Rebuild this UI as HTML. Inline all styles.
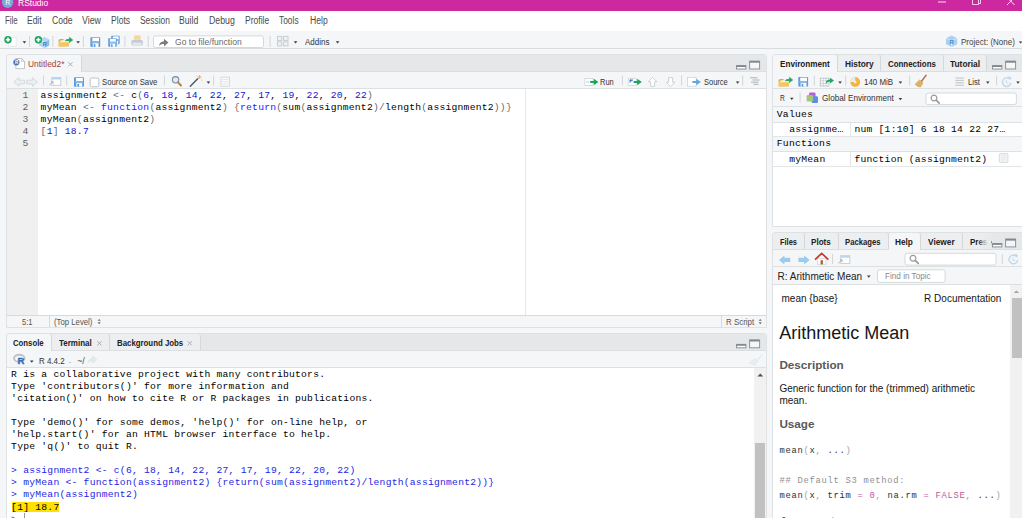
<!DOCTYPE html>
<html><head><meta charset="utf-8">
<style>
*{box-sizing:border-box;margin:0;padding:0}
html,body{width:1022px;height:518px;overflow:hidden;background:#f4f6f7;font-family:"Liberation Sans",sans-serif;}
.a{position:absolute;white-space:nowrap}
.mono{position:absolute;font-family:"Liberation Mono",monospace;font-size:9.7px;letter-spacing:0.228px;white-space:pre;color:#000;margin:0}
.pane{position:absolute;background:#fff;border:1px solid #dfe2e5;border-radius:3px 3px 0 0;overflow:hidden}
.ts{position:absolute;left:0;top:0;right:0;height:17px;background:#e5e7e8;border-bottom:1px solid #dcdfe1}
.tab{position:absolute;top:0;height:16px;border-right:1px solid #d5d8da;background:#eceeef;border-radius:3px 3px 0 0}
.tab.sel{background:#f4f6f7;border-right:1px solid #d5d8da;height:17px}
.tb{position:absolute;left:0;right:0;background:#f4f6f7;border-bottom:1px solid #dce0e3}
.k{color:#1a1aff}.n{color:#1414cd}.p{color:#6a6a6a}
.cb{color:#2525e6}
.hs{font-family:"Liberation Sans",sans-serif;color:#161616}
.hm{font-family:"Liberation Mono",monospace;font-size:8.8px;letter-spacing:0.72px;line-height:15px;white-space:pre;color:#2e2e2e}
.hm .g{color:#9aa3aa}.hm .m{color:#c0589a}.hm .c{color:#909090}
</style></head><body>

<!-- title bar -->
<div class="a" style="left:0;top:0;width:1022px;height:11px;background:#cc29a1"></div>
<!-- menu bar -->
<div class="a" style="left:0;top:11px;width:1022px;height:20px;background:#fff"></div>
<!-- main toolbar -->
<div class="a" style="left:0;top:31px;width:1022px;height:18px;background:#f4f6f7;border-bottom:1px solid #d9dcde"></div>

<!-- SOURCE PANE -->
<div class="pane" style="left:6px;top:54px;width:761px;height:274px">
  <div class="ts"></div>
  <div class="tab sel" style="left:0;width:75px"></div>
  <div class="tb" style="top:17px;height:17px"></div>
  <div class="a" style="left:0;top:34px;width:31px;height:227px;background:#f0f0f0"></div>
  <div class="a" style="left:518px;top:34px;width:1px;height:227px;background:#e8e8e8"></div>
  <div class="a" style="left:0;top:260px;width:759px;height:13px;background:#f4f6f7;border-top:1px solid #d6dadc"></div>
  <div class="a" style="left:42px;top:261px;width:1px;height:12px;background:#d6dadc"></div>
  <div class="a" style="left:714px;top:261px;width:1px;height:12px;background:#d6dadc"></div>
</div>
<div class="mono" style="left:7px;top:90.15px;width:21.6px;text-align:right;line-height:11.93px;color:#5f5f5f">1
2
3
4
5</div>
<div class="mono" style="left:40.6px;top:90.15px;line-height:11.93px">assignment2 <span class="p">&lt;-</span> c<span class="p">(</span><span class="n">6</span>, <span class="n">18</span>, <span class="n">14</span>, <span class="n">22</span>, <span class="n">27</span>, <span class="n">17</span>, <span class="n">19</span>, <span class="n">22</span>, <span class="n">20</span>, <span class="n">22</span><span class="p">)</span>
myMean <span class="p">&lt;-</span> <span class="k">function</span><span class="p">(</span>assignment2<span class="p">)</span> <span class="p">{</span><span class="k">return</span><span class="p">(</span>sum<span class="p">(</span>assignment2<span class="p">)/</span>length<span class="p">(</span>assignment2<span class="p">))}</span>
myMean<span class="p">(</span>assignment2<span class="p">)</span>
<span class="p">[</span><span class="n">1</span><span class="p">]</span> <span class="n">18.7</span></div>

<!-- CONSOLE PANE -->
<div class="pane" style="left:6px;top:333px;width:761px;height:190px">
  <div class="ts"></div>
  <div class="tab sel" style="left:0;width:45px"></div>
  <div class="tab" style="left:45px;width:58px"></div>
  <div class="tab" style="left:103px;width:91px"></div>
  <div class="tb" style="top:17px;height:17px"></div>
  <div class="a" style="left:747px;top:34px;width:13px;height:160px;background:#f1f1f1"></div>
  <div class="a" style="left:748px;top:109px;width:10px;height:80px;background:#c1c1c1"></div>
</div>
<div class="a" style="left:12px;top:502px;width:47px;height:9.5px;background:#ffe100"></div>
<div class="mono" style="left:11.1px;top:368.5px;line-height:12.1px">R is a collaborative project with many contributors.
Type 'contributors()' for more information and
'citation()' on how to cite R or R packages in publications.

Type 'demo()' for some demos, 'help()' for on-line help, or
'help.start()' for an HTML browser interface to help.
Type 'q()' to quit R.

<span class="cb">&gt; assignment2 &lt;- c(6, 18, 14, 22, 27, 17, 19, 22, 20, 22)
&gt; myMean &lt;- function(assignment2) {return(sum(assignment2)/length(assignment2))}
&gt; myMean(assignment2)</span>
[1] 18.7
<span class="cb">&gt;</span> </div>
<div class="a" style="left:24px;top:513px;width:1px;height:6px;background:#9a9a9a"></div>

<!-- ENV PANE -->
<div class="pane" style="left:772px;top:54px;width:256px;height:173px">
  <div class="ts"></div>
  <div class="tab sel" style="left:0;width:65px"></div>
  <div class="tab" style="left:65px;width:43px"></div>
  <div class="tab" style="left:108px;width:63px"></div>
  <div class="tab" style="left:171px;width:43px"></div>
  <div class="tb" style="top:17px;height:17px"></div>
  <div class="tb" style="top:34px;height:18px"></div>
  <div class="tb" style="top:52px;height:16px;border-bottom:1px solid #dfe2e4"></div>
  <div class="a" style="left:0;top:81px;width:256px;height:1px;background:#e3e6e8"></div>
  <div class="tb" style="top:82px;height:15px;border-bottom:1px solid #dfe2e4"></div>
  <div class="a" style="left:0;top:111px;width:256px;height:1px;background:#e3e6e8"></div>
  <div class="a" style="left:77px;top:68px;width:1px;height:13px;background:#e3e6e8"></div>
  <div class="a" style="left:77px;top:97px;width:1px;height:14px;background:#e3e6e8"></div>
</div>
<div class="mono" style="left:776.8px;top:110px;line-height:10px">Values</div>
<div class="mono" style="left:789.2px;top:125.4px;line-height:10px">assignme…</div>
<div class="mono" style="left:854.4px;top:125.4px;line-height:10px">num [1:10] 6 18 14 22 27…</div>
<div class="mono" style="left:776.8px;top:139.4px;line-height:10px">Functions</div>
<div class="mono" style="left:789.2px;top:154.9px;line-height:10px">myMean</div>
<div class="mono" style="left:854.4px;top:154.9px;line-height:10px">function (assignment2)</div>

<!-- HELP PANE -->
<div class="pane" style="left:772px;top:232px;width:256px;height:290px">
  <div class="ts"></div>
  <div class="tab" style="left:0;width:32px"></div>
  <div class="tab" style="left:32px;width:34px"></div>
  <div class="tab" style="left:66px;width:50px"></div>
  <div class="tab sel" style="left:116px;width:32px"></div>
  <div class="tab" style="left:148px;width:42px"></div>
  <div class="tab" style="left:190px;width:30px;border-right:none;background:linear-gradient(90deg,#eceeef 70%,#e5e7e8)"></div>
  <div class="tb" style="top:17px;height:17px"></div>
  <div class="tb" style="top:34px;height:18px"></div>
  <div class="a" style="left:237px;top:52px;width:13px;height:240px;background:#f1f1f1"></div>
  <div class="a" style="left:239px;top:65px;width:10px;height:60px;background:#c1c1c1"></div>
</div>
<div class="a hs" style="left:777.6px;top:271.5px;font-size:10px;line-height:10px;color:#222">R: Arithmetic Mean</div>
<div class="a hs" style="left:781.5px;top:294.2px;font-size:10px;line-height:10px">mean {base}</div>
<div class="a hs" style="left:924.1px;top:294.2px;font-size:10px;line-height:10px">R Documentation</div>
<div class="a hs" style="left:779.2px;top:323.7px;font-size:18px;line-height:18px">Arithmetic Mean</div>
<div class="a hs" style="left:779.4px;top:358.5px;font-size:11.7px;line-height:12px;font-weight:bold;color:#595959">Description</div>
<div class="a hs" style="left:779.4px;top:383.2px;font-size:10px;line-height:11.4px;white-space:normal;width:215px">Generic function for the (trimmed) arithmetic mean.</div>
<div class="a hs" style="left:779.4px;top:417.7px;font-size:11.7px;line-height:12px;font-weight:bold;color:#595959">Usage</div>
<div class="a hm" style="left:779.4px;top:444.4px">mean<span class="g">(</span>x<span class="g">,</span> ...<span class="g">)</span>

<span class="c">## Default S3 method:</span>
mean<span class="g">(</span>x<span class="g">,</span> trim <span class="m">=</span> <span class="m">0</span><span class="g">,</span> na.rm <span class="m">=</span> <span class="m">FALSE</span><span class="g">,</span> ...<span class="g">)</span></div>
<div class="a hs" style="left:779.4px;top:515px;font-size:11.7px;line-height:12px;font-weight:bold;color:#595959">Arguments</div>

<svg class="a" style="left:0;top:0" width="1022" height="518" viewBox="0 0 1022 518">
<defs>
<path id="dd" d="M0 0h3.6l-1.8 2.2z" fill="#3a3a3a"/>
<g id="floppy"><rect x="0" y="0" width="9.8" height="9.8" rx=".9" fill="#5c9bdb"/><rect x="1.9" y=".7" width="6.8" height="3.4" fill="#fff"/><rect x="1" y="4.1" width="7.800" height="2" fill="#86b8e8"/><rect x="2.300" y="6.100" width="5.800" height="3.700" fill="#fff"/><rect x="3.300" y="6.900" width="1.700" height="2.900" fill="#5c9bdb"/></g>
<g id="minmax" fill="none" stroke="#8c949b">
<rect x="0.5" y="5" width="9.4" height="3.4" fill="#fff"/><path d="M0.5 5.6h9.4" stroke-width="1.6" stroke="#7f8890"/>
<rect x="13.6" y="0.6" width="10" height="7.8" fill="#f4f6f7"/><path d="M13.6 1.2h10" stroke-width="1.8" stroke="#7f8890"/>
</g>
<g id="mag"><circle cx="3.4" cy="3.4" r="2.9" fill="none" stroke="#9a9a9a" stroke-width="1.2"/><path d="M5.6 5.6l3 3" stroke="#9a9a9a" stroke-width="1.7" stroke-linecap="round"/></g>
<g id="folder"><path d="M.6 4l1-1.500h3.600l1 1.100h4.400v6h-10z" fill="#e0a83f"/><path d="M2.200 4.200l7.600-1.400.8 3.200-8 1.200z" fill="#fffdf6" stroke="#e6dcc0" stroke-width=".4"/><path d="M.2 9.800l1.400-4.300h10.200l-1.400 4.300z" fill="#f1c660"/><path d="M.2 9.800l1.400-4.300h10.200" fill="none" stroke="#f9e3a4" stroke-width=".6"/><path d="M6.600 4.800c1-2 2.800-2.700 4.600-2.700v-2l4 3.200-4 3.200v-2c-1.700-.1-3.300.1-4.600.3z" fill="#2aa86c"/></g>
<g id="refresh"><path d="M8.7 2.2a4.3 4.3 0 1 0 1.5 3.9" fill="none" stroke="#c3d8ea" stroke-width="1.500"/><path d="M6.800 0l4 .3-1.200 3.700z" fill="#c3d8ea"/><path d="M5.5 3.4v3h2.4" fill="none" stroke="#c7dbed" stroke-width="1"/></g>
<g id="popout"><rect x="2.5" y="0.5" width="9" height="7.8" fill="#fff" stroke="#c9ced3"/><rect x="2.5" y="0.5" width="9" height="2" fill="#b9d6f0"/><path d="M0 8.2l3.6-3.4M1.6 4.6h2.2v2.2" fill="none" stroke="#aeb4ba" stroke-width="1"/></g>
<g id="xx"><path d="M0 0l4.2 4.2M4.2 0l-4.2 4.2" stroke="#a9adb1" stroke-width="1"/></g>
</defs>

<g id="title">
<circle cx="7.600" cy="2.300" r="5.700" fill="#76aadb"/>
<text x="5.300" y="5" font-family="Liberation Sans" font-size="7" fill="#fff">R</text>
<path d="M938 2h8" stroke="#fff" stroke-width="1" opacity=".85"/>
<path d="M972.5 -1v5.5h6v-5.5M974.5 -1v-1h6v5.5h-2" stroke="#fff" fill="none" stroke-width=".9" opacity=".85"/>
<path d="M1007 -2.5l7.5 7.5M1014.5 -2.5l-7.5 7.5" stroke="#fff" stroke-width="1" opacity=".9"/>
</g>

<g id="maintb">
<!-- new file -->
<rect x="8.3" y="37.4" width="7.8" height="8.8" fill="#fff" stroke="#dfe2e5" stroke-width=".6"/>
<circle cx="8" cy="39.700" r="3.700" fill="#1fa55f"/><path d="M8 37.600v4.200M5.900 39.700h4.200" stroke="#fff" stroke-width="1.600"/>
<use href="#dd" x="22.6" y="41.2"/>
<path d="M29.5 36v11M52.9 36v11M83.3 36v11M124.9 36v11M148.2 36v11M270.1 36v11" stroke="#d3d6d8" stroke-width="1"/>
<!-- new project -->
<path d="M39 39.400l5.200-2.400 5 2.200v6.300l-5 2.400-5.200-2.400z" fill="#b4d6f3"/><path d="M44.200 41.700l5-2.500v6.300l-5 2.400z" fill="#8ebfec"/><path d="M39 39.400l5.200 2.300 5-2.500M44.200 41.700v6.200" stroke="#dcecfa" stroke-width=".6" fill="none"/>
<text x="42.800" y="45.600" font-family="Liberation Sans" font-size="5.500" font-weight="bold" fill="#3f7dc4">R</text>
<circle cx="38.400" cy="39.800" r="3.700" fill="#1fa55f"/><path d="M38.400 37.700v4.200M36.300 39.800h4.200" stroke="#fff" stroke-width="1.600"/>
<!-- open -->
<use href="#folder" x="58" y="36.6"/>
<use href="#dd" x="76.3" y="41.2"/>
<!-- save / save all -->
<use href="#floppy" x="90.4" y="37.2"/>
<g transform="translate(111.2 35.8) scale(.86)"><use href="#floppy"/></g>
<g transform="translate(108.2 38.2) scale(.88)"><use href="#floppy"/></g>
<!-- print -->
<rect x="133.800" y="35.400" width="7" height="5.200" fill="#f6dcae"/><path d="M135 36.500h4.600M135 38h4.600" stroke="#eec98c" stroke-width=".6"/>
<rect x="131.300" y="40" width="11.600" height="5.400" rx="1.600" fill="#c3ccd6"/><rect x="132.600" y="42.600" width="9" height="2.400" fill="#e3e8ed"/>
<!-- goto box -->
<rect x="153.5" y="35.9" width="110" height="11.6" rx="2" fill="#fff" stroke="#d6d9db"/>
<path d="M159 46c.4-3 2.2-4.6 5-4.8v-2.4l4.4 3.8-4.4 3.8v-2.5c-2-.1-3.6.4-5 2.100z" fill="#7b7b7b"/>
<!-- grid -->
<g fill="#f0f2f3" stroke="#c5c9cd" stroke-width=".9"><rect x="277.4" y="36.4" width="4.4" height="4"/><rect x="283.6" y="36.4" width="4.4" height="4"/><rect x="277.4" y="41.9" width="4.4" height="4"/><rect x="283.6" y="41.9" width="4.4" height="4"/></g>
<use href="#dd" x="293.8" y="41.2"/>
<use href="#dd" x="335.8" y="41.2"/>
<!-- project -->
<path d="M946 38.2l5.6-2.8 5.6 2.800v6l-5.600 2.700-5.600-2.700z" fill="#a9d0f2"/><path d="M946 38.200l5.600 2.400 5.600-2.400M951.600 40.600v6.300" stroke="#dcecfa" stroke-width=".7" fill="none"/>
<text x="949.600" y="44.400" font-family="Liberation Sans" font-size="6" font-weight="bold" fill="#4a84c4">R</text>
<use href="#dd" x="1018.8" y="41.4"/>
</g>

<g id="srcpane">
<!-- tab icon -->
<path d="M15.800 58.500h5.800l2.900 2.900v7.200h-8.700z" fill="#fff" stroke="#b5b9bd" stroke-width=".8"/><path d="M21.600 58.500v2.900h2.900" fill="none" stroke="#b5b9bd" stroke-width=".7"/>
<circle cx="16.400" cy="62.300" r="3.100" fill="#4878b4"/><text x="14.900" y="64" font-family="Liberation Sans" font-size="4.600" font-weight="bold" fill="#fff">R</text>
<use href="#xx" x="68.300" y="62.200"/>
<!-- back/forward -->
<path d="M13.800 82l5.200-4.400v2.600h5.600v3.700h-5.600v2.500z" fill="#eceff1" stroke="#d3d7da" stroke-width=".9"/>
<path d="M37.600 82l-5.200-4.400v2.600h-5.600v3.700h5.600v2.500z" fill="#eceff1" stroke="#d3d7da" stroke-width=".9"/>
<path d="M43.500 75.500v10M66.700 75.500v10M164.400 75.500v10M213.600 75.500v10M622.400 75.500v10M681.600 75.500v10M742.700 75.500v10" stroke="#d3d6d8"/>
<use href="#popout" x="49.300" y="77"/>
<g transform="translate(74 77.300) scale(1.02 .96)"><use href="#floppy"/></g>
<rect x="90.200" y="78" width="8.600" height="8.800" rx="1.600" fill="#fff" stroke="#b9bcbf" stroke-width=".9"/>
<!-- magnifier -->
<circle cx="175.600" cy="79.800" r="3.200" fill="#dcecf9" stroke="#7d8b99" stroke-width="1.100"/><path d="M178 82.300l3 3.200" stroke="#b9823a" stroke-width="1.900" stroke-linecap="round"/>
<!-- wand -->
<path d="M190.300 86.200l7.400-7.400" stroke="#4f5560" stroke-width="1.400" stroke-linecap="round"/><path d="M199.600 75.200v3.600M197.800 77h3.600M201.400 79.800l1 .9M196.600 75.600l.8.800" stroke="#e7a91d" stroke-width=".9"/>
<use href="#dd" x="206.600" y="81.500"/>
<!-- list icon -->
<rect x="221" y="77.200" width="8.400" height="9" fill="#fafbfb" stroke="#d3d6d9" stroke-width=".9"/><path d="M222.500 79.500h6M222.500 81.700h6M222.500 83.900h6" stroke="#dde0e3" stroke-width=".8"/>
<!-- run -->
<rect x="584.900" y="78.400" width="8" height="7" fill="#fff" stroke="#d0d4d8" stroke-width=".8"/><path d="M586.300 82h3" stroke="#9ecbef" stroke-width="1"/>
<path d="M590.200 81h3.600v-2.300l4.600 3.300-4.600 3.300v-2.300h-3.600z" fill="#1fa35d"/>
<!-- rerun -->
<rect x="628.200" y="78.400" width="8" height="7" fill="#fff" stroke="#d0d4d8" stroke-width=".8"/>
<path d="M630 82.500c0-2 1.500-2.600 3-2.300" fill="none" stroke="#3f7fd0" stroke-width="1.200"/><path d="M629 80.600l2.200-1.800.3 2.800z" fill="#3f7fd0"/>
<path d="M633.600 81h3.600v-2.300l4.600 3.300-4.600 3.300v-2.300h-3.600z" fill="#1fa35d"/>
<!-- up/down -->
<path d="M652.600 77.300l4.300 4.500h-2.300v4.600h-4v-4.600h-2.300z" fill="#fff" stroke="#c9cdd1" stroke-width=".9"/>
<path d="M670.600 86.700l4.300-4.500h-2.300v-4.600h-4v4.600h-2.300z" fill="#fff" stroke="#c9cdd1" stroke-width=".9"/>
<!-- source -->
<rect x="687.600" y="77.400" width="8.600" height="8.800" fill="#fff" stroke="#d0d4d8" stroke-width=".8"/>
<path d="M692.400 81h3.800v-2.300l4.600 3.300-4.600 3.300v-2.300h-3.800z" fill="#62a6de"/>
<use href="#dd" x="735.800" y="81.500"/>
<path d="M750 77.800h7.500M752.500 80h7M751 82.200h7.500M753.500 84.300h5" stroke="#a4a9ae" stroke-width=".9"/>
<use href="#minmax" x="736" y="60.600"/>
<!-- status arrows -->
<path d="M97.600 320.800l1.600-1.900 1.600 1.900zM97.600 322.300l1.600 1.900 1.600-1.900z" fill="#6a6a6a"/>
<path d="M758.600 320.800l1.600-1.900 1.600 1.900zM758.600 322.300l1.600 1.900 1.600-1.900z" fill="#6a6a6a"/>
</g>

<g id="conpane">
<use href="#xx" x="97.300" y="341.200"/><use href="#xx" x="187.600" y="341.200"/>
<ellipse cx="19.300" cy="358.300" rx="5.300" ry="3.500" fill="none" stroke="#bfc3c7" stroke-width="1.900"/>
<text x="17.600" y="363.700" font-family="Liberation Sans" font-size="9.500" font-weight="bold" fill="#2a6cb8" stroke="#2a6cb8" stroke-width=".3">R</text>
<use href="#dd" x="30" y="360.500"/>
<path d="M88 363c.3-3 2-4.600 4.600-4.800v-2.200l4.200 3.600-4.200 3.600v-2.300c-1.900-.1-3.300.4-4.600 2.100z" fill="#e6e9ec" stroke="#dde1e4" stroke-width=".6"/>
<path d="M762.600 354.200l-7 8" stroke="#dfe3e6" stroke-width="1"/><path d="M749.500 363l5-4.600 3.400 2.800-2.500 4.300z" fill="#e6edf3" stroke="#dfe5ea" stroke-width=".6"/>
<use href="#minmax" x="736" y="339.400"/>
<path d="M757.400 376.400l2.900-2.800 2.900 2.800z" fill="#4f4f4f"/>
</g>

<g id="envpane">
<use href="#minmax" x="992" y="60.600"/>
<use href="#folder" x="778" y="76.600"/>
<g transform="translate(798.300 77) scale(1 .97)"><use href="#floppy"/></g>
<path d="M814.300 75.500v10M845.700 75.500v10M909.700 75.500v10M996.600 75.500v10" stroke="#d3d6d8"/>
<!-- import -->
<rect x="820.300" y="78.200" width="8.600" height="7.800" fill="#fff" stroke="#b4bac0" stroke-width=".8"/><path d="M820.300 80.800h8.600M820.300 83.400h8.600M823.200 78.200v7.800M826 78.200v7.800" stroke="#bcc2c8" stroke-width=".7"/>
<path d="M826 81.800c.8-1.600 2.200-2.300 4-2.300v-1.800l4 2.900-4 2.900v-1.800c-1.600-.1-2.900.4-4 2z" fill="#26a468"/>
<use href="#dd" x="838.300" y="81.500"/>
<!-- pie -->
<circle cx="855.200" cy="82" r="4.900" fill="#f4b53f"/><path d="M855.200 82v-4.900a4.900 4.900 0 0 0-4.900 4.900z" fill="#e9ebed"/><circle cx="855.200" cy="82" r="1.300" fill="#fbf3e2"/>
<use href="#dd" x="898.600" y="81.500"/>
<!-- broom -->
<path d="M926 75.400l-4.600 6" stroke="#b06a35" stroke-width="1.500" stroke-linecap="round"/><path d="M915.200 84.200l4.400-4.200 3.400 2.700-2.400 4.100c-2 .3-3.900-.7-5.400-2.600z" fill="#e3b566" stroke="#c28f45" stroke-width=".5"/><path d="M917 84.800l2.600-2.600M918.600 85.800l2.400-2.600" stroke="#c9994d" stroke-width=".5"/>
<!-- list -->
<path d="M955.400 78h8.400M955.400 80.400h8.400M955.400 82.800h8.400M955.400 85.200h8.400" stroke="#b7bcc1" stroke-width=".9"/>
<use href="#dd" x="986" y="81.500"/>
<use href="#refresh" x="1000.800" y="76.600"/>
<use href="#dd" x="1016.200" y="81.500"/>
<!-- tb2 -->
<use href="#dd" x="790" y="97.700"/>
<path d="M800.100 92.500v10" stroke="#d3d6d8"/>
<rect x="809" y="92.400" width="6.500" height="6.500" rx="1.200" fill="#b45fd3"/><rect x="811.500" y="96.200" width="6.500" height="6.800" rx="1.200" fill="#5b8fe6"/><rect x="806.600" y="95" width="6.500" height="6.500" rx="1.200" fill="#a5c679"/>
<use href="#dd" x="898.600" y="98"/>
<rect x="926" y="93" width="90.400" height="11.600" rx="2" fill="#fff" stroke="#d6d9db"/>
<use href="#mag" x="930.600" y="94.600"/>
<!-- row doc icon -->
<rect x="999.300" y="153.600" width="8.600" height="8.800" rx=".8" fill="#f3f4f5" stroke="#d4d7da" stroke-width=".9"/><path d="M1001 156h5M1001 158h5M1001 160h3.500" stroke="#dfe2e4" stroke-width=".7"/>
</g>

<g id="helppane">
<use href="#minmax" x="992" y="238.500"/>
<path d="M779 259.900l5.400-4.500v2.400h5.800v4.200h-5.800v2.400z" fill="#9acbf0"/>
<path d="M809.600 259.900l-5.400-4.500v2.400h-5.800v4.200h5.800v2.400z" fill="#9acbf0"/>
<!-- home -->
<rect x="817.400" y="258.600" width="8.600" height="5.800" fill="#fbfbfb" stroke="#c9cdd1" stroke-width=".6"/><rect x="820.600" y="260.200" width="2.300" height="4.200" fill="#a5642c"/>
<path d="M815 259.600l6.700-6.300 6.700 6.300" fill="none" stroke="#c8392b" stroke-width="1.700" stroke-linejoin="miter"/>
<path d="M832.500 254v10M1002.300 254v10" stroke="#d3d6d8"/>
<use href="#popout" x="838.300" y="255.200"/>
<rect x="905" y="253.300" width="91" height="11.800" rx="2" fill="#fff" stroke="#d6d9db"/>
<use href="#mag" x="909.600" y="254.800"/>
<g transform="translate(1007.400 254)"><use href="#refresh"/></g>
<use href="#dd" x="867" y="275.600"/>
<rect x="877.500" y="269.800" width="67.600" height="12.600" rx="2" fill="#fff" stroke="#d6d9db"/>
<path d="M1013.600 293l2.800-2.600 2.800 2.600z" fill="#a5a5a5"/>
</g>

</svg>
<div class="a" style="left:17.8px;top:-1.8px;font-size:9.5px;line-height:9.5px;color:#ffffff;transform:scaleX(0.893);transform-origin:0 0">RStudio</div>
<div class="a" style="left:5.0px;top:15.7px;font-size:10px;line-height:10px;color:#4a4a4a;transform:scaleX(0.781);transform-origin:0 0">File</div>
<div class="a" style="left:27.4px;top:15.7px;font-size:10px;line-height:10px;color:#4a4a4a;transform:scaleX(0.847);transform-origin:0 0">Edit</div>
<div class="a" style="left:52.2px;top:15.7px;font-size:10px;line-height:10px;color:#4a4a4a;transform:scaleX(0.862);transform-origin:0 0">Code</div>
<div class="a" style="left:82.2px;top:15.7px;font-size:10px;line-height:10px;color:#4a4a4a;transform:scaleX(0.884);transform-origin:0 0">View</div>
<div class="a" style="left:111.0px;top:15.7px;font-size:10px;line-height:10px;color:#4a4a4a;transform:scaleX(0.859);transform-origin:0 0">Plots</div>
<div class="a" style="left:139.5px;top:15.7px;font-size:10px;line-height:10px;color:#4a4a4a;transform:scaleX(0.838);transform-origin:0 0">Session</div>
<div class="a" style="left:178.5px;top:15.7px;font-size:10px;line-height:10px;color:#4a4a4a;transform:scaleX(0.863);transform-origin:0 0">Build</div>
<div class="a" style="left:208.8px;top:15.7px;font-size:10px;line-height:10px;color:#4a4a4a;transform:scaleX(0.876);transform-origin:0 0">Debug</div>
<div class="a" style="left:244.8px;top:15.7px;font-size:10px;line-height:10px;color:#4a4a4a;transform:scaleX(0.853);transform-origin:0 0">Profile</div>
<div class="a" style="left:279.2px;top:15.7px;font-size:10px;line-height:10px;color:#4a4a4a;transform:scaleX(0.839);transform-origin:0 0">Tools</div>
<div class="a" style="left:309.8px;top:15.7px;font-size:10px;line-height:10px;color:#4a4a4a;transform:scaleX(0.860);transform-origin:0 0">Help</div>
<div class="a" style="left:175.2px;top:36.7px;font-size:9.6px;line-height:9.6px;color:#6a6a6a;transform:scaleX(0.893);transform-origin:0 0">Go to file/function</div>
<div class="a" style="left:304.8px;top:36.7px;font-size:9.6px;line-height:9.6px;color:#333;transform:scaleX(0.835);transform-origin:0 0">Addins</div>
<div class="a" style="left:960.9px;top:36.9px;font-size:9.6px;line-height:9.6px;color:#444;transform:scaleX(0.835);transform-origin:0 0">Project: (None)</div>
<div class="a" style="left:28.2px;top:58.8px;font-size:9.6px;line-height:9.6px;color:#a5423c;transform:scaleX(0.875);transform-origin:0 0">Untitled2*</div>
<div class="a" style="left:102.0px;top:76.7px;font-size:9.6px;line-height:9.6px;color:#333;transform:scaleX(0.811);transform-origin:0 0">Source on Save</div>
<div class="a" style="left:600.3px;top:76.9px;font-size:9.6px;line-height:9.6px;color:#333;transform:scaleX(0.778);transform-origin:0 0">Run</div>
<div class="a" style="left:703.7px;top:76.9px;font-size:9.6px;line-height:9.6px;color:#333;transform:scaleX(0.783);transform-origin:0 0">Source</div>
<div class="a" style="left:22.2px;top:318.3px;font-size:8.6px;line-height:8.6px;color:#555;transform:scaleX(0.870);transform-origin:0 0">5:1</div>
<div class="a" style="left:53.8px;top:318.3px;font-size:8.6px;line-height:8.6px;color:#555;transform:scaleX(0.903);transform-origin:0 0">(Top Level)</div>
<div class="a" style="left:725.8px;top:318.3px;font-size:8.6px;line-height:8.6px;color:#555;transform:scaleX(0.923);transform-origin:0 0">R Script</div>
<div class="a" style="left:13.3px;top:337.9px;font-size:9.6px;line-height:9.6px;color:#222;font-weight:bold;transform:scaleX(0.811);transform-origin:0 0">Console</div>
<div class="a" style="left:59.3px;top:337.9px;font-size:9.6px;line-height:9.6px;color:#222;font-weight:bold;transform:scaleX(0.832);transform-origin:0 0">Terminal</div>
<div class="a" style="left:116.8px;top:337.9px;font-size:9.6px;line-height:9.6px;color:#222;font-weight:bold;transform:scaleX(0.817);transform-origin:0 0">Background Jobs</div>
<div class="a" style="left:38.6px;top:355.7px;font-size:9.6px;line-height:9.6px;color:#333;transform:scaleX(0.827);transform-origin:0 0">R 4.4.2</div>
<div class="a" style="left:69.4px;top:357.2px;font-size:9.6px;line-height:9.6px;color:#555;transform:scaleX(0.624);transform-origin:0 0">·</div>
<div class="a" style="left:76.7px;top:355.7px;font-size:9.6px;line-height:9.6px;color:#555;transform:scaleX(0.942);transform-origin:0 0">~/</div>
<div class="a" style="left:780.2px;top:58.9px;font-size:9.6px;line-height:9.6px;color:#222;font-weight:bold;transform:scaleX(0.849);transform-origin:0 0">Environment</div>
<div class="a" style="left:844.5px;top:58.9px;font-size:9.6px;line-height:9.6px;color:#222;font-weight:bold;transform:scaleX(0.868);transform-origin:0 0">History</div>
<div class="a" style="left:887.6px;top:58.9px;font-size:9.6px;line-height:9.6px;color:#222;font-weight:bold;transform:scaleX(0.824);transform-origin:0 0">Connections</div>
<div class="a" style="left:950.2px;top:58.9px;font-size:9.6px;line-height:9.6px;color:#222;font-weight:bold;transform:scaleX(0.873);transform-origin:0 0">Tutorial</div>
<div class="a" style="left:864.4px;top:76.9px;font-size:9.6px;line-height:9.6px;color:#333;transform:scaleX(0.824);transform-origin:0 0">140 MiB</div>
<div class="a" style="left:968.4px;top:76.9px;font-size:9.6px;line-height:9.6px;color:#333;transform:scaleX(0.803);transform-origin:0 0">List</div>
<div class="a" style="left:779.8px;top:93.4px;font-size:9.6px;line-height:9.6px;color:#333;transform:scaleX(0.692);transform-origin:0 0">R</div>
<div class="a" style="left:821.5px;top:93.4px;font-size:9.6px;line-height:9.6px;color:#333;transform:scaleX(0.853);transform-origin:0 0">Global Environment</div>
<div class="a" style="left:779.9px;top:236.6px;font-size:9.6px;line-height:9.6px;color:#222;font-weight:bold;transform:scaleX(0.777);transform-origin:0 0">Files</div>
<div class="a" style="left:811.4px;top:236.6px;font-size:9.6px;line-height:9.6px;color:#222;font-weight:bold;transform:scaleX(0.844);transform-origin:0 0">Plots</div>
<div class="a" style="left:845.4px;top:236.6px;font-size:9.6px;line-height:9.6px;color:#222;font-weight:bold;transform:scaleX(0.802);transform-origin:0 0">Packages</div>
<div class="a" style="left:895.4px;top:236.6px;font-size:9.6px;line-height:9.6px;color:#222;font-weight:bold;transform:scaleX(0.861);transform-origin:0 0">Help</div>
<div class="a" style="left:927.8px;top:236.6px;font-size:9.6px;line-height:9.6px;color:#222;font-weight:bold;transform:scaleX(0.865);transform-origin:0 0">Viewer</div>
<div class="a" style="left:969.5px;top:236.6px;font-size:9.6px;line-height:9.6px;color:#222;font-weight:bold;transform:scaleX(0.830);transform-origin:0 0">Prese</div>
<div class="a" style="left:884.6px;top:271.7px;font-size:9px;line-height:9px;color:#8a8a8a;transform:scaleX(0.907);transform-origin:0 0">Find in Topic</div>
<div class="a" style="left:978px;top:234px;width:13px;height:15px;background:linear-gradient(90deg,rgba(236,238,239,0),#e8eaeb 75%)"></div>
</body></html>
